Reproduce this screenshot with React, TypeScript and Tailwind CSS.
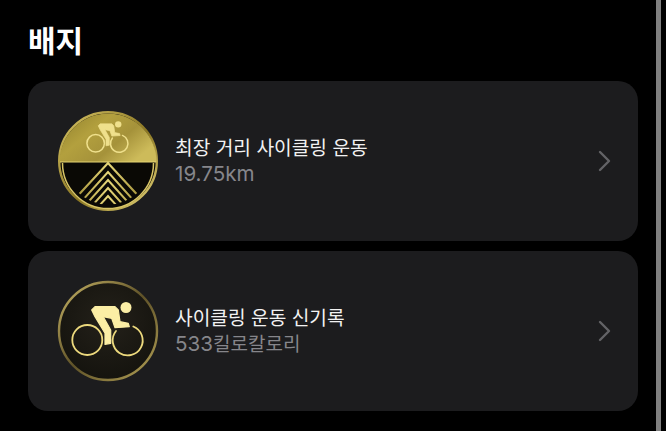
const font = { fontFamily: 'Inter, "Noto Sans CJK KR", "Noto Sans", sans-serif' };

function Rider({ color, wheel, sw }: { color: string; wheel: string; sw: number }) {
  return (
    <g>
      <circle cx="69" cy="27.5" r="5.5" fill={color} />
      <path
        d="M34.7 30 L38 26.7 L58 26.7 L61.3 30 L63 41.7 L71.3 43.3 L72.3 46.7 L58 47.7 L54.7 38.3 L46.3 36.7 L53.7 50 L53.7 63.3 L48 64.3 L48 53.3 L38 36.7 Z"
        fill={color}
        stroke={color}
        strokeWidth="1.2"
        strokeLinejoin="round"
      />
      <circle cx="30.3" cy="60" r="15" fill="none" stroke={wheel} strokeWidth={sw} />
      <path d="M59 51 A 15 15 0 1 0 76.3 46.5" fill="none" stroke={wheel} strokeWidth={sw} strokeLinecap="round" />
    </g>
  );
}

function BadgeOne() {
  return (
    <svg width="102" height="102" viewBox="0 0 102 102" className="shrink-0">
      <defs>
        <linearGradient id="g1" x1="0" y1="0" x2="1" y2="0.6">
          <stop offset="0" stopColor="#8f7f2c" />
          <stop offset="0.4" stopColor="#b3a03e" />
          <stop offset="0.7" stopColor="#a5923a" />
          <stop offset="1" stopColor="#cdbb5a" />
        </linearGradient>
        <linearGradient id="g2" x1="0" y1="0" x2="1" y2="1">
          <stop offset="0" stopColor="#d8c566" />
          <stop offset="0.55" stopColor="#8a7622" />
          <stop offset="1" stopColor="#ead97e" />
        </linearGradient>
        <linearGradient id="g3" x1="0" y1="0" x2="0" y2="1">
          <stop offset="0" stopColor="#e6d679" />
          <stop offset="1" stopColor="#9c8a32" />
        </linearGradient>
        <clipPath id="c1">
          <circle cx="51" cy="51" r="43.5" />
        </clipPath>
      </defs>
      <circle cx="51" cy="51" r="48.8" fill="#0a0905" stroke="url(#g2)" strokeWidth="2.4" />
      <path d="M2.5 52 A 48.5 48.5 0 0 1 99.5 52 Z" fill="url(#g1)" />
      <line x1="3" y1="52" x2="99" y2="52" stroke="#e4d373" strokeWidth="1.2" />
      <path d="M5.5 53 A 45.5 45.5 0 0 0 96.5 53" fill="none" stroke="#d8c566" strokeWidth="1.5" />
      <g clipPath="url(#c1)" fill="none" stroke="url(#g3)" strokeWidth="2">
        <path d="M15 92 L51 53 L87 92" strokeWidth="2.2" />
        <path d="M15 102 L51 62 L87 102" />
        <path d="M15 110 L51 70 L87 110" />
        <path d="M15 118 L51 78 L87 118" />
        <path d="M15 126 L51 86 L87 126" />
      </g>
      <g transform="translate(21 -1.7) scale(0.583)">
        <Rider color="#efe08c" wheel="#efe08c" sw={2.6} />
      </g>
    </svg>
  );
}

function BadgeTwo() {
  return (
    <svg width="102" height="102" viewBox="0 0 102 102" className="shrink-0">
      <defs>
        <linearGradient id="r2" x1="0" y1="0" x2="1" y2="1">
          <stop offset="0" stopColor="#c8b566" />
          <stop offset="0.5" stopColor="#5f5228" />
          <stop offset="1" stopColor="#b5a357" />
        </linearGradient>
        <radialGradient id="f2" cx="0.5" cy="0.4" r="0.7">
          <stop offset="0" stopColor="#24211a" />
          <stop offset="1" stopColor="#12110c" />
        </radialGradient>
      </defs>
      <circle cx="51" cy="51" r="49" fill="url(#f2)" stroke="url(#r2)" strokeWidth="2.4" />
      <Rider color="#fbeea5" wheel="#ecd97d" sw={1.8} />
    </svg>
  );
}

function Row({ badge, title, sub }: { badge: React.ReactNode; title: string; sub: React.ReactNode }) {
  return (
    <div className="flex h-[160px] items-center rounded-[20px] bg-[#1c1c1e] pl-[29px] pr-[25px]">
      {badge}
      <div className="ml-4 flex flex-1 flex-col">
        <div className="text-[19.2px] leading-[25px] text-[#f2f2f2]">{title}</div>
        <div className="text-[20.6px] leading-[25px] text-[#86868b]">{sub}</div>
      </div>
      <svg width="16" height="24" viewBox="0 0 16 24" fill="none" stroke="#636366" strokeWidth="2.4" strokeLinecap="round" strokeLinejoin="round">
        <path d="M3 3 L12 12 L3 21" />
      </svg>
    </div>
  );
}

export default function App() {
  return (
    <div className="flex h-[431px] w-[666px] overflow-hidden bg-black" style={font}>
      <div className="flex w-[656px] flex-col pl-[28px] pr-[18px]">
        <h1 className="mt-[21px] mb-[19px] text-[30px] leading-[41px] font-bold text-white">배지</h1>
        <div className="flex flex-col gap-[10px]">
          <Row badge={<BadgeOne />} title="최장 거리 사이클링 운동" sub="19.75km" />
          <Row
            badge={<BadgeTwo />}
            title="사이클링 운동 신기록"
            sub={
              <>
                533<span className="text-[19px]">킬로칼로리</span>
              </>
            }
          />
        </div>
      </div>
      <div className="h-full w-[5px] bg-[#808080]" />
    </div>
  );
}
